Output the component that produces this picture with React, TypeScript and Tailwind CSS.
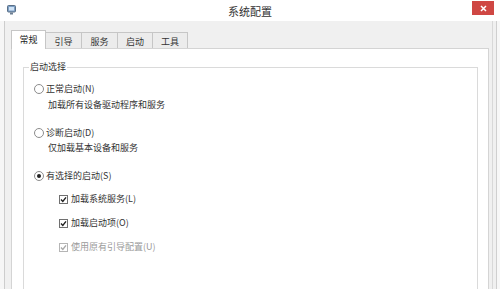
import React from "react";

const font = { fontFamily: '"Noto Sans CJK SC", "Noto Sans", sans-serif' };

function Radio({ checked, label }: { checked?: boolean; label: string }) {
  return (
    <div className="flex items-center h-[12px] gap-[2px]">
      <span className="w-[10px] h-[10px] rounded-full border border-[#8c8c8c] bg-white flex items-center justify-center shrink-0">
        {checked && <span className="w-[4px] h-[4px] rounded-full bg-[#222]" />}
      </span>
      <span className="text-[9px] leading-[12px] text-[#333] whitespace-nowrap">{label}</span>
    </div>
  );
}

function Check({ label, disabled }: { label: string; disabled?: boolean }) {
  const c = disabled ? "#a8a8a8" : "#1f1f1f";
  return (
    <div className="flex items-center h-[12px] gap-[3px]">
      <span
        className={
          "w-[9px] h-[9px] border bg-white flex items-center justify-center shrink-0 " +
          (disabled ? "border-[#b5b5b5]" : "border-[#707070]")
        }
      >
        <svg width="7" height="7" viewBox="0 0 7 7">
          <path d="M1 3.6 L2.8 5.4 L6 1.4" fill="none" stroke={c} strokeWidth="1.4" />
        </svg>
      </span>
      <span className={"text-[9px] leading-[12px] whitespace-nowrap " + (disabled ? "text-[#9a9a9a]" : "text-[#333]")}>
        {label}
      </span>
    </div>
  );
}

export default function App() {
  return (
    <div className="w-[500px] h-[289px] bg-white overflow-hidden flex flex-col" style={font}>
      {/* Title bar */}
      <div className="h-[21px] shrink-0 flex items-start">
        <div className="w-[22px] h-full pl-[7px] pt-[5px]">
          <svg width="9" height="10" viewBox="0 0 9 10">
            <rect x="0.5" y="0.5" width="8" height="6.5" rx="1" fill="#7d9fc4" stroke="#5a6f86" />
            <rect x="2" y="2" width="5" height="3.5" fill="#cfe2f5" />
            <rect x="3" y="7.5" width="3" height="2" fill="#6c7e92" />
          </svg>
        </div>
        <div className="flex-1 h-full flex items-center justify-center pl-[6px]">
          <span className="text-[11px] leading-[14px] text-[#333]">系统配置</span>
        </div>
        <div className="w-[28px] h-full flex items-start">
          <div className="mt-[1px] w-[22px] h-[14px] bg-[#cf4743] flex items-center justify-center">
            <svg width="7" height="7" viewBox="0 0 7 7">
              <path d="M1 1 L6 6 M6 1 L1 6" stroke="#fff" strokeWidth="1.5" />
            </svg>
          </div>
        </div>
      </div>

      {/* Body */}
      <div className="h-[300px] shrink-0 flex">
        <div className="w-[4px] bg-[#f6f6f6]" />
        <div className="w-[1px] bg-[#cdcdcd]" />
        <div className="flex-1 bg-[#f0f0f0] pl-[6px] pr-[3px] pt-[9px] flex flex-col min-w-0">
          {/* Tabs */}
          <div className="flex items-start h-[19px] relative z-10 shrink-0">
            <div className="w-[35px] h-[19px] bg-white border border-b-0 border-[#c6c6c6] flex items-start justify-center pt-[3px]">
              <span className="text-[9px] leading-[12px] text-[#222]">常规</span>
            </div>
            {[
              ["引导", "w-[36px]"],
              ["服务", "w-[36px]"],
              ["启动", "w-[35px]"],
              ["工具", "w-[35px]"],
            ].map(([t, w]) => (
              <div
                key={t}
                className={w + " mt-[2px] h-[16px] bg-[#ececec] border-t border-r border-[#c6c6c6] flex items-start justify-center pt-[3px]"}
              >
                <span className="text-[9px] leading-[12px] text-[#333]">{t}</span>
              </div>
            ))}
          </div>
          {/* Panel */}
          <div className="-mt-[1px] h-[300px] shrink-0 bg-white border border-[#d4d4d4] pl-[11px] pr-[10px] pt-[18px]">
            <div className="relative border border-[#dadada] h-[260px] pl-[10px] pt-[15px] flex flex-col">
              <span className="absolute left-[5px] -top-[7px] bg-white px-[1px] text-[9px] leading-[12px] text-[#333]">
                启动选择
              </span>
              <Radio label="正常启动(N)" />
              <div className="mt-[4px] ml-[14px] text-[9px] leading-[12px] text-[#333]">加载所有设备驱动程序和服务</div>
              <div className="mt-[16px]">
                <Radio label="诊断启动(D)" />
              </div>
              <div className="mt-[3px] ml-[14px] text-[9px] leading-[12px] text-[#333]">仅加载基本设备和服务</div>
              <div className="mt-[16px]">
                <Radio checked label="有选择的启动(S)" />
              </div>
              <div className="ml-[25px] mt-[11px] flex flex-col gap-[12px]">
                <Check label="加载系统服务(L)" />
                <Check label="加载启动项(O)" />
                <Check disabled label="使用原有引导配置(U)" />
              </div>
            </div>
          </div>
        </div>
        <div className="w-[1px] bg-[#d8d8d8]" />
        <div className="w-[3px] bg-[#f0f0f0]" />
        <div className="w-[1px] bg-[#cfcfcf]" />
        <div className="w-[3px] bg-[#f7f7f7]" />
      </div>
    </div>
  );
}
